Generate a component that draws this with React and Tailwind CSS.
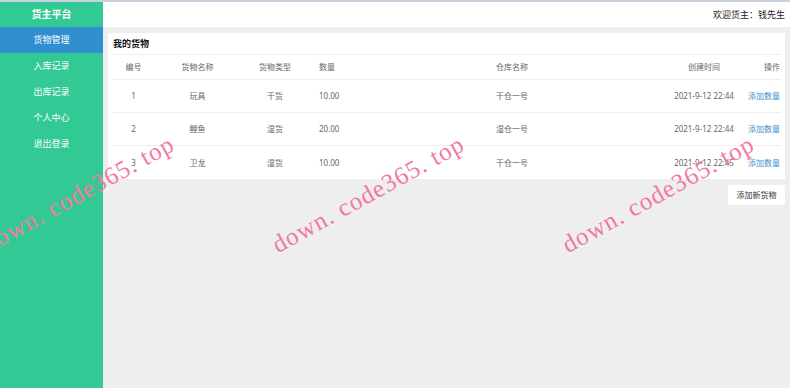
import React from 'react';

const goods = [
    { id: 1, name: '玩具', type: '干货', qty: '10.00', store: '干仓一号', time: '2021-9-12 22:44' },
    { id: 2, name: '鲤鱼', type: '湿货', qty: '20.00', store: '湿仓一号', time: '2021-9-12 22:44' },
    { id: 3, name: '卫龙', type: '湿货', qty: '10.00', store: '干仓一号', time: '2021-9-12 22:45' },
];

const menu = ['货物管理', '入库记录', '出库记录', '个人中心', '退出登录'];

const cols = 'grid grid-cols-[43px_85px_70px_110px_184px_56px_88px_32px] items-center';

const Watermark = ({ left }) => (
    <div
        className="absolute top-[230px] origin-bottom-left -rotate-[29deg] whitespace-nowrap text-[25px] tracking-[1px] leading-none text-[#f27a9f] pointer-events-none"
        style={{ left, fontFamily: '"Liberation Serif", serif' }}
    >
        down. code365. top
    </div>
);

export default function App() {
    return (
        <div
            className="relative h-[388px] w-[790px] overflow-hidden flex border-t-2 border-[#c7d1df] bg-[#eeeeee]"
            style={{ fontFamily: '"Noto Sans", "Noto Sans CJK SC", sans-serif' }}
        >
            {/* 左侧菜单 */}
            <aside className="w-[103px] shrink-0 bg-[#33c994] flex flex-col text-white">
                <div className="h-[25px] flex items-center justify-center text-[10px] font-bold">货主平台</div>
                {menu.map((m, i) => (
                    <div
                        key={m}
                        className={`h-[26px] flex items-center justify-center text-[9px] ${i === 0 ? 'bg-[#2f8fcf]' : ''}`}
                    >
                        {m}
                    </div>
                ))}
            </aside>

            {/* 主区域 */}
            <main className="flex-1 flex flex-col">
                <header className="h-[25px] bg-white flex items-center justify-end pr-[5px] text-[9px] text-[#222]">
                    欢迎货主：钱先生
                </header>

                <div className="px-[5px] pt-[6px] flex flex-col">
                    <div className="bg-white px-[4px]">
                        <div className="h-[22px] flex items-center pl-[1px] border-b border-[#eeeeee] text-[9px] font-bold text-[#111]">
                            我的货物
                        </div>
                        <div className={`${cols} h-[25px] border-b border-[#eeeeee] text-[8px] text-[#666]`}>
                            <span className="text-center">编号</span>
                            <span className="text-center">货物名称</span>
                            <span className="text-center">货物类型</span>
                            <span className="pl-[9px]">数量</span>
                            <span className="text-center">仓库名称</span>
                            <span></span>
                            <span className="text-center">创建时间</span>
                            <span className="text-right">操作</span>
                        </div>
                        {goods.map((g, i) => (
                            <div
                                key={g.id}
                                className={`${cols} h-[33px] text-[8px] text-[#666] ${i < goods.length - 1 ? 'border-b border-[#eeeeee]' : ''}`}
                            >
                                <span className="text-center">{g.id}</span>
                                <span className="text-center">{g.name}</span>
                                <span className="text-center">{g.type}</span>
                                <span className="pl-[9px]">{g.qty}</span>
                                <span className="text-center">{g.store}</span>
                                <span></span>
                                <span className="text-center whitespace-nowrap">{g.time}</span>
                                <span className="text-right whitespace-nowrap text-[#3a8fd0]">添加数量</span>
                            </div>
                        ))}
                    </div>

                    <div className="flex justify-end mt-[6px]">
                        <button className="h-[20px] w-[57px] bg-white rounded-[2px] text-[8px] text-[#333]">添加新货物</button>
                    </div>
                </div>
            </main>

            <Watermark left={-10} />
            <Watermark left={280} />
            <Watermark left={570} />
        </div>
    );
}
